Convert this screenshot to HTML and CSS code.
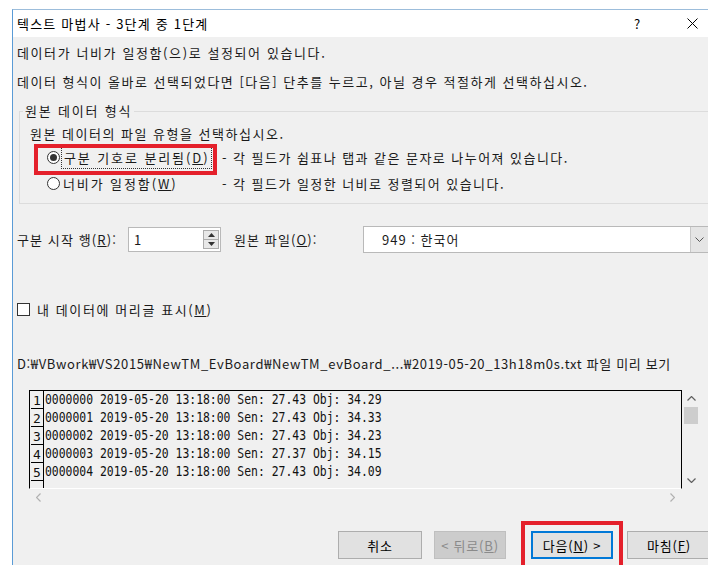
FILE: index.html
```html
<!DOCTYPE html>
<html lang="ko">
<head>
<meta charset="utf-8">
<title>텍스트 마법사</title>
<link rel="stylesheet" href="styles.css">
</head>
<body>
<div class="window">
  <div class="titlebar">
    <span class="title">텍스트 마법사 - 3단계 중 1단계</span>
    <span class="tb-help">?</span>
    <span class="tb-close">
      <svg width="11" height="11" viewBox="0 0 11 11"><path d="M0.5 0.5 L10.5 10.5 M10.5 0.5 L0.5 10.5" stroke="#000" stroke-width="1" fill="none"/></svg>
    </span>
  </div>

  <div class="content">
    <p class="line line1">데이터가 너비가 일정함(으)로 설정되어 있습니다.</p>
    <p class="line line2">데이터 형식이 올바로 선택되었다면 [다음] 단추를 누르고, 아닐 경우 적절하게 선택하십시오.</p>

    <fieldset class="group">
      <legend>원본 데이터 형식</legend>
      <div class="instr">원본 데이터의 파일 유형을 선택하십시오.</div>
      <div class="radio-row">
        <span class="radio checked"></span>
        <span class="radio-label"><span class="focus">구분 기호로 분리됨(<u>D</u>)</span></span>
        <span class="desc">- 각 필드가 쉼표나 탭과 같은 문자로 나누어져 있습니다.</span>
        <span class="mark mark-radio"></span>
      </div>
      <div class="radio-row">
        <span class="radio"></span>
        <span class="radio-label">너비가 일정함(<u>W</u>)</span>
        <span class="desc">- 각 필드가 일정한 너비로 정렬되어 있습니다.</span>
      </div>
    </fieldset>

    <div class="start-row">
      <span class="lbl-start">구분 시작 행(<u>R</u>):</span>
      <div class="spin">
        <span class="spin-value">1</span>
        <div class="spin-btns">
          <span class="spin-btn"><svg width="7" height="4" viewBox="0 0 7 4"><path d="M0 4 L3.5 0 L7 4 Z" fill="#333"/></svg></span>
          <span class="spin-btn"><svg width="7" height="4" viewBox="0 0 7 4"><path d="M0 0 L3.5 4 L7 0 Z" fill="#333"/></svg></span>
        </div>
      </div>
      <span class="lbl-origin">원본 파일(<u>O</u>):</span>
      <div class="combo">
        <span class="combo-value">949 : 한국어</span>
        <span class="combo-btn"><svg width="9" height="5" viewBox="0 0 9 5"><path d="M0.5 0.5 L4.5 4.5 L8.5 0.5" stroke="#555" stroke-width="1" fill="none"/></svg></span>
      </div>
    </div>

    <div class="check-row">
      <span class="checkbox"></span>
      <span class="check-label">내 데이터에 머리글 표시(<u>M</u>)</span>
    </div>

    <p class="path">D:₩VBwork₩VS2015₩NewTM_EvBoard₩NewTM_evBoard_...₩2019-05-20_13h18m0s.txt 파일 미리 보기</p>

    <div class="preview">
      <div class="preview-main">
        <div class="grid">
          <div class="prow"><span class="pnum">1</span><span class="ptext">0000000 2019-05-20 13:18:00 Sen: 27.43 Obj: 34.29</span></div>
          <div class="prow"><span class="pnum">2</span><span class="ptext">0000001 2019-05-20 13:18:00 Sen: 27.43 Obj: 34.33</span></div>
          <div class="prow"><span class="pnum">3</span><span class="ptext">0000002 2019-05-20 13:18:00 Sen: 27.43 Obj: 34.23</span></div>
          <div class="prow"><span class="pnum">4</span><span class="ptext">0000003 2019-05-20 13:18:00 Sen: 27.37 Obj: 34.15</span></div>
          <div class="prow"><span class="pnum">5</span><span class="ptext">0000004 2019-05-20 13:18:00 Sen: 27.43 Obj: 34.09</span></div>
          <div class="prow"><span class="pnum"></span></div>
        </div>
        <div class="vscroll">
          <span class="sb-arrow"><svg width="9" height="5" viewBox="0 0 9 5"><path d="M0.5 4.5 L4.5 0.5 L8.5 4.5" stroke="#606060" stroke-width="1.2" fill="none"/></svg></span>
          <span class="sb-thumb"></span>
          <span class="sb-fill"></span>
          <span class="sb-arrow"><svg width="9" height="5" viewBox="0 0 9 5"><path d="M0.5 0.5 L4.5 4.5 L8.5 0.5" stroke="#606060" stroke-width="1.2" fill="none"/></svg></span>
        </div>
      </div>
      <div class="hscroll">
        <svg width="5" height="9" viewBox="0 0 5 9"><path d="M4.5 0.5 L0.5 4.5 L4.5 8.5" stroke="#b0b0b0" stroke-width="1.2" fill="none"/></svg>
        <svg width="5" height="9" viewBox="0 0 5 9"><path d="M0.5 0.5 L4.5 4.5 L0.5 8.5" stroke="#b0b0b0" stroke-width="1.2" fill="none"/></svg>
      </div>
    </div>

    <div class="buttons">
      <span class="btn btn-cancel">취소</span>
      <span class="btn btn-back disabled">&lt; 뒤로(<u>B</u>)</span>
      <span class="btn btn-next default">다음(<u>N</u>) &gt;<span class="mark mark-next"></span></span>
      <span class="btn btn-finish">마침(<u>F</u>)</span>
    </div>
  </div>
</div>
</body>
</html>
```

FILE: styles.css
```css
html, body {
  margin: 0;
  padding: 0;
  width: 708px;
  height: 565px;
  overflow: hidden;
  background: #ffffff;
}

body {
  font-family: "Noto Sans CJK KR", "Noto Sans", sans-serif;
  font-size: 13px;
  color: #1a1a1a;
}

u {
  text-decoration: underline;
  text-underline-offset: 1px;
}

/* dialog frame */
.window {
  margin: 9px 0 0 12px;
  width: 706px;
  height: 620px;
  box-sizing: border-box;
  border-left: 1px solid #5a9bd6;
  border-top: 1px solid #9cbddb;
  background: #f0f0f0;
}

.titlebar {
  height: 27px;
  background: #ffffff;
  display: flex;
  align-items: center;
  padding-left: 4px;
  color: #000;
}

.title {
  flex: 1;
  letter-spacing: 1.2px;
}

.tb-help {
  width: 12px;
  text-align: center;
  margin-right: 44px;
}

.tb-close {
  width: 11px;
  height: 11px;
  margin-right: 20px;
  display: flex;
}

.content {
  padding-left: 4px;
}

.line {
  margin: 0;
  line-height: 20px;
  white-space: nowrap;
}

.line1 {
  margin-top: 6px;
  letter-spacing: 1.6px;
}

.line2 {
  margin-top: 9px;
  letter-spacing: 1.5px;
}

/* group box */
.group {
  margin: 11px 0 0 2px;
  padding: 0 0 7px 10px;
  border: 1px solid #dcdcdc;
  min-width: 0;
  width: 720px;
  box-sizing: border-box;
}

.group legend {
  padding: 0 2px;
  margin-left: -7px;
  line-height: 16px;
  letter-spacing: 1.8px;
}

.instr {
  line-height: 20px;
  margin-top: 5px;
  letter-spacing: 1.5px;
}

.radio-row {
  position: relative;
  display: flex;
  align-items: center;
  height: 26px;
  padding-left: 17px;
}

.radio {
  width: 11px;
  height: 11px;
  border: 1px solid #333;
  border-radius: 50%;
  background: #fff;
  display: flex;
  align-items: center;
  justify-content: center;
}

.radio.checked::after {
  content: "";
  width: 7px;
  height: 7px;
  border-radius: 50%;
  background: #333;
}

.radio-label {
  width: 159px;
  margin-left: 3px;
  display: flex;
  letter-spacing: 1.9px;
  white-space: nowrap;
}

.desc {
  letter-spacing: 1.45px;
  white-space: nowrap;
}

.focus {
  outline: 1px dotted #333;
  outline-offset: 1px;
  padding: 0 1px;
}

/* red annotation boxes */
.mark {
  position: absolute;
  border: 4px solid #e4202b;
  box-sizing: border-box;
  pointer-events: none;
}

.mark-radio {
  left: 4px;
  top: 0;
  width: 183px;
  height: 31px;
}

/* start row / source file */
.start-row {
  display: flex;
  align-items: center;
  margin-top: 22px;
  height: 27px;
}

.lbl-start {
  width: 111px;
  letter-spacing: 1.1px;
  white-space: nowrap;
}

.spin {
  width: 93px;
  height: 25px;
  box-sizing: border-box;
  border: 1px solid #b9b9b9;
  background: #fff;
  display: flex;
  align-items: center;
  justify-content: space-between;
  padding-left: 5px;
}

.spin-btns {
  display: flex;
  flex-direction: column;
  width: 16px;
  height: 19px;
  margin-right: 1px;
}

.spin-btn {
  flex: 1;
  display: flex;
  align-items: center;
  justify-content: center;
  background: #e8e8e8;
  border: 1px solid #acacac;
}

.spin-btn + .spin-btn {
  border-top: none;
}

.lbl-origin {
  margin-left: 13px;
  width: 129px;
  letter-spacing: 1.1px;
  white-space: nowrap;
}

.combo {
  width: 346px;
  height: 27px;
  box-sizing: border-box;
  border: 1px solid #b9b9b9;
  background: #fff;
  display: flex;
  align-items: center;
  justify-content: space-between;
  padding-left: 18px;
}

.combo-value {
  letter-spacing: 1px;
}

.combo-btn {
  width: 17px;
  height: 25px;
  background: #e5e5e5;
  border-left: 1px solid #c8c8c8;
  display: flex;
  align-items: center;
  justify-content: center;
}

/* header checkbox */
.check-row {
  display: flex;
  align-items: center;
  height: 20px;
  margin-top: 46px;
}

.checkbox {
  width: 11px;
  height: 11px;
  border: 1px solid #333;
  background: #fff;
  margin-right: 7px;
}

.check-label {
  letter-spacing: 1.6px;
}

.path {
  margin: 35px 0 0;
  line-height: 20px;
  letter-spacing: 0.65px;
  white-space: nowrap;
}

/* data preview */
.preview {
  margin: 16px 0 0 12px;
  width: 672px;
}

.preview-main {
  display: flex;
  height: 99px;
}

.grid {
  width: 653px;
  box-sizing: border-box;
  border-left: 1px solid #000;
  border-top: 1px solid #000;
  border-right: 1px solid #000;
  border-bottom: 1px solid #ffffff;
  overflow: hidden;
}

.prow {
  display: flex;
  height: 18px;
}

.pnum {
  width: 13px;
  flex: none;
  box-sizing: border-box;
  border-right: 1px solid #000;
  border-bottom: 1px solid #000;
  margin-left: 1px;
  font-family: "DejaVu Sans Mono", monospace;
  font-size: 13px;
  line-height: 19px;
  padding-left: 2px;
  color: #111;
}

.ptext {
  font-family: "DejaVu Sans Mono", monospace;
  font-size: 14px;
  line-height: 17px;
  white-space: pre;
  color: #111;
  transform: scaleX(0.815);
  transform-origin: left center;
  margin-left: 1px;
}

.vscroll {
  width: 18px;
  display: flex;
  flex-direction: column;
  align-items: center;
}

.sb-arrow {
  height: 17px;
  display: flex;
  align-items: center;
  justify-content: center;
}

.sb-thumb {
  width: 14px;
  height: 17px;
  background: #cdcdcd;
}

.sb-fill {
  flex: 1;
}

.hscroll {
  height: 16px;
  display: flex;
  align-items: center;
  justify-content: space-between;
  padding: 0 26px 0 7px;
}

/* dialog buttons */
.buttons {
  display: flex;
  margin-top: 26px;
  padding-left: 321px;
}

.btn {
  position: relative;
  height: 28px;
  box-sizing: border-box;
  border: 1px solid #adadad;
  background: #e1e1e1;
  display: flex;
  align-items: center;
  justify-content: center;
  color: #000;
  letter-spacing: 0.8px;
}

.btn-cancel {
  width: 84px;
}

.btn-back {
  width: 72px;
  margin-left: 12px;
}

.btn.disabled {
  background: #cccccc;
  border-color: #bfbfbf;
  color: #8a8a8a;
}

.btn-next {
  width: 82px;
  margin-left: 25px;
  border: 2px solid #0078d7;
  background: #e1e1e1;
}

.btn-finish {
  width: 84px;
  margin-left: 14px;
}

.mark-next {
  left: -12px;
  top: -12px;
  width: 102px;
  height: 60px;
}
```
